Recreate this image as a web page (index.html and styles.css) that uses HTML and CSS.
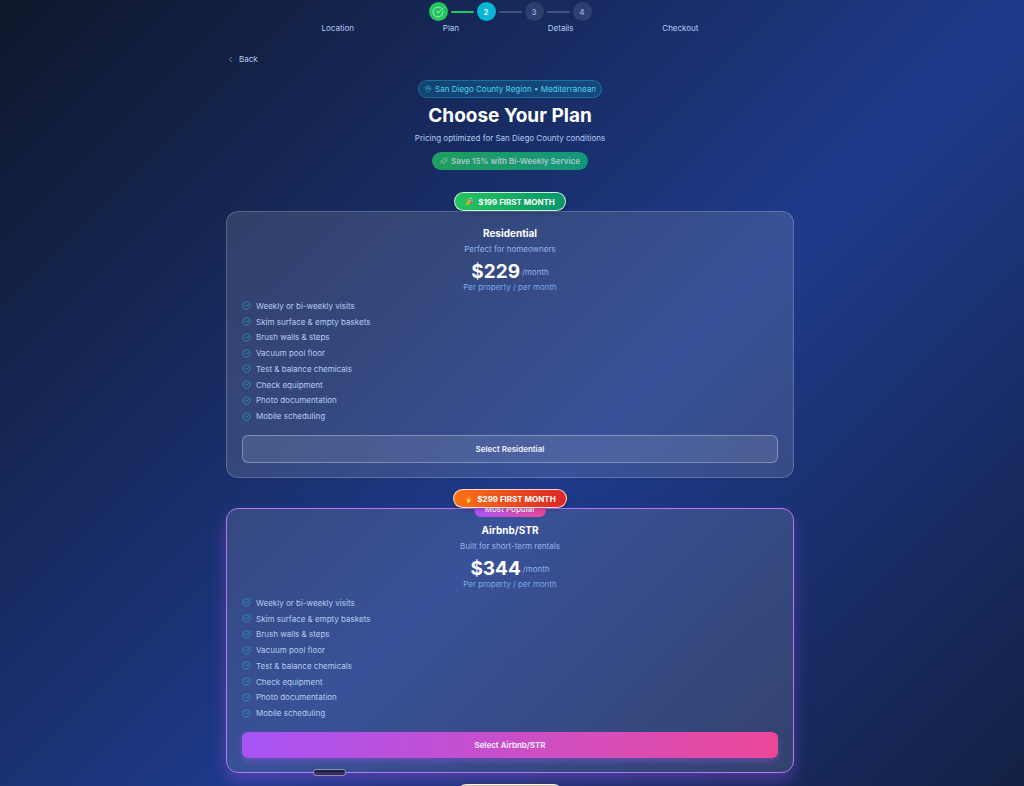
FILE: index.html
```
<!DOCTYPE html>
<html lang="en">
<head>
    <meta charset="UTF-8">
    <meta name="viewport" content="width=device-width, initial-scale=1.0">
    <title>Choose Your Plan</title>
    <link rel="stylesheet" href="styles.css">
</head>
<body>
    <svg class="sprite" aria-hidden="true">
        <symbol id="check" viewBox="0 0 24 24">
            <path d="M21.8 10A10 10 0 1 1 17 3.3"/>
            <path d="m9 11 3 3L22 4"/>
        </symbol>
        <symbol id="party" viewBox="0 0 24 24">
            <path d="M2 22 8 7l9 9z" fill="#fbbf24"/>
            <path d="M5 15l5 4M7 10l7 7" stroke="#ea580c" stroke-width="2"/>
            <path d="M11 12c2-3 1-6-1-9M14 13c1-4 4-4 7-5" stroke="#f9a8d4" stroke-width="2" fill="none"/>
            <path d="M13 15c3-2 6-1 9 1" stroke="#ef4444" stroke-width="3" fill="none"/>
            <circle cx="5" cy="5" r="2" fill="#f87171"/>
            <circle cx="17" cy="3" r="2" fill="#fde047"/>
            <circle cx="20" cy="12" r="2" fill="#60a5fa"/>
        </symbol>
        <symbol id="fire" viewBox="0 0 24 24">
            <path d="M11 1c2 5 7 8 8 13 1 6-3 9-7 9s-8-3-7-9c0-3 2-5 3-7 1 2 1 3 2 4 2-3 2-6 1-10z" fill="#ff8a1f"/>
            <path d="M12 11c1 3 4 4 4 8 0 2-2 4-4 4s-4-2-4-4c0-3 3-4 4-8z" fill="#ffe066"/>
        </symbol>
    </svg>

    <main class="page">
        <nav class="progress" aria-label="Progress">
            <div class="steps">
                <span class="step done"><svg class="icon"><use href="#check"/></svg></span>
                <span class="line done"></span>
                <span class="step current">2</span>
                <span class="line"></span>
                <span class="step">3</span>
                <span class="line"></span>
                <span class="step">4</span>
            </div>
            <div class="step-labels">
                <span>Location</span>
                <span>Plan</span>
                <span>Details</span>
                <span>Checkout</span>
            </div>
        </nav>

        <button type="button" class="back">
            <svg class="icon" viewBox="0 0 24 24"><path d="m15 18-6-6 6-6"/></svg>
            Back
        </button>

        <header class="intro">
            <div class="region">
                <svg class="icon" viewBox="0 0 24 24"><path d="M20 10c0 5-5.500 10.200-7.400 11.800a1 1 0 0 1-1.200 0C9.500 20.200 4 15 4 10a8 8 0 0 1 16 0"/><circle cx="12" cy="10" r="3"/></svg>
                San Diego County Region • Mediterranean
            </div>
            <h1>Choose Your Plan</h1>
            <p>Pricing optimized for San Diego County conditions</p>
            <div class="save">
                <svg class="icon" viewBox="0 0 24 24"><path d="M10 15.500a2 2 0 0 0-1.400-1.400l-6.200-1.600a.5.5 0 0 1 0-1l6.200-1.600A2 2 0 0 0 10 8.500l1.500-6.100a.5.5 0 0 1 1 0L14 8.500a2 2 0 0 0 1.500 1.400l6.100 1.600a.5.5 0 0 1 0 1l-6.100 1.600a2 2 0 0 0-1.500 1.400l-1.500 6.100a.5.5 0 0 1-1 0zM20 3v4M22 5h-4M4 17v2M5 18H3"/></svg>
                Save 15% with Bi-Weekly Service
            </div>
        </header>

        <section class="plan">
            <div class="promo green"><svg class="emoji"><use href="#party"/></svg>$199 FIRST MONTH</div>
            <article class="card">
                <h2>Residential</h2>
                <p class="tagline">Perfect for homeowners</p>
                <p class="price"><strong>$229</strong> /month</p>
                <p class="unit">Per property / per month</p>
                <ul class="features">
                    <li><svg class="icon"><use href="#check"/></svg>Weekly or bi-weekly visits</li>
                    <li><svg class="icon"><use href="#check"/></svg>Skim surface &amp; empty baskets</li>
                    <li><svg class="icon"><use href="#check"/></svg>Brush walls &amp; steps</li>
                    <li><svg class="icon"><use href="#check"/></svg>Vacuum pool floor</li>
                    <li><svg class="icon"><use href="#check"/></svg>Test &amp; balance chemicals</li>
                    <li><svg class="icon"><use href="#check"/></svg>Check equipment</li>
                    <li><svg class="icon"><use href="#check"/></svg>Photo documentation</li>
                    <li><svg class="icon"><use href="#check"/></svg>Mobile scheduling</li>
                </ul>
                <button type="button" class="select outline">Select Residential</button>
            </article>
        </section>

        <section class="plan">
            <div class="promo orange"><svg class="emoji"><use href="#fire"/></svg>$299 FIRST MONTH</div>
            <article class="card popular">
                <span class="popular-tag">Most Popular</span>
                <h2>Airbnb/STR</h2>
                <p class="tagline">Built for short-term rentals</p>
                <p class="price"><strong>$344</strong> /month</p>
                <p class="unit">Per property / per month</p>
                <ul class="features">
                    <li><svg class="icon"><use href="#check"/></svg>Weekly or bi-weekly visits</li>
                    <li><svg class="icon"><use href="#check"/></svg>Skim surface &amp; empty baskets</li>
                    <li><svg class="icon"><use href="#check"/></svg>Brush walls &amp; steps</li>
                    <li><svg class="icon"><use href="#check"/></svg>Vacuum pool floor</li>
                    <li><svg class="icon"><use href="#check"/></svg>Test &amp; balance chemicals</li>
                    <li><svg class="icon"><use href="#check"/></svg>Check equipment</li>
                    <li><svg class="icon"><use href="#check"/></svg>Photo documentation</li>
                    <li><svg class="icon"><use href="#check"/></svg>Mobile scheduling</li>
                </ul>
                <button type="button" class="select gradient">Select Airbnb/STR</button>
            </article>
        </section>

        <section class="plan">
            <div class="promo gold"></div>
        </section>
    </main>

    <div class="handle"></div>
</body>
</html>
```
FILE: styles.css
```
* {
    box-sizing: border-box;
    margin: 0;
    padding: 0;
}

html {
    min-height: 100%;
    background: #0f172a;
}

body {
    height: 100vh;
    padding: 2px 4px 0 0;
    overflow: hidden;
    font-family: Inter, "Liberation Sans", sans-serif;
    font-size: 8px;
    line-height: 12px;
    color: #b4ccf0;
    background: linear-gradient(135deg, #0f172a 0%, #1e3a8a 57%, #0f172a 116%);
}

button {
    font: inherit;
    cursor: pointer;
}

.sprite {
    display: none;
}

.icon {
    width: 9px;
    height: 9px;
    flex-shrink: 0;
    fill: none;
    stroke: currentColor;
    stroke-width: 2;
    stroke-linecap: round;
    stroke-linejoin: round;
}

.page {
    width: 100%;
    max-width: 568px;
    margin: 0 auto;
}

/* progress */
.progress {
    max-width: 377px;
    margin: 0 auto;
}

.steps {
    display: flex;
    justify-content: center;
    align-items: center;
    gap: 3px;
}

.step {
    display: flex;
    align-items: center;
    justify-content: center;
    width: 19px;
    height: 19px;
    border-radius: 50%;
    background: rgba(255, 255, 255, 0.1);
    color: #7ba6ea;
    font-weight: 600;
}

.step.done {
    background: #22c55e;
    color: #a7ecc0;
}

.step .icon {
    width: 12px;
    height: 12px;
}

.step.current {
    background: #06b6d4;
    color: #fff;
}

.line {
    width: 23px;
    height: 2px;
    border-radius: 1px;
    background: rgba(255, 255, 255, 0.2);
}

.line.done {
    background: #22c55e;
}

.step-labels {
    display: flex;
    justify-content: space-between;
    margin-top: 1px;
}

.back {
    display: flex;
    align-items: center;
    gap: 4px;
    margin-top: 19px;
    border: 0;
    background: none;
    color: #b4ccf0;
}

.back .icon {
    opacity: 0.7;
}

/* heading */
.intro {
    display: flex;
    flex-direction: column;
    align-items: center;
    margin-top: 15px;
}

.region,
.save {
    display: flex;
    align-items: center;
    gap: 3px;
    height: 18px;
    padding: 0 8px;
    border-radius: 9px;
}

.region {
    padding: 0 5px;
    border: 1px solid rgba(34, 211, 238, 0.3);
    background: rgba(6, 182, 212, 0.2);
    color: #4fd0ea;
}

.region .icon,
.save .icon {
    width: 8px;
    height: 8px;
    opacity: 0.7;
}

h1 {
    margin-top: 6px;
    font-size: 19px;
    line-height: 24px;
    color: #fff;
}

.intro p {
    margin-top: 4px;
}

.save {
    margin-top: 8px;
    background: linear-gradient(to right, #22c55e, #10b981);
    color: #dff5ea;
    font-weight: 600;
    opacity: 0.75;
}

/* plans */
.plan {
    display: flex;
    flex-direction: column;
    align-items: center;
    margin-top: 11px;
}

.intro + .plan {
    margin-top: 22px;
}

.promo {
    position: relative;
    z-index: 1;
    display: flex;
    align-items: center;
    gap: 4px;
    height: 19px;
    padding: 0 10px;
    border: 1px solid rgba(255, 255, 255, 0.8);
    border-radius: 10px;
    color: #fff;
    font-weight: 700;
    box-shadow: 0 2px 4px rgba(0, 0, 0, 0.2);
}

.emoji {
    width: 9px;
    height: 9px;
}

.green {
    background: linear-gradient(to right, #22c55e, #059669);
}

.orange {
    background: linear-gradient(to right, #f97316, #dc2626);
}

.gold {
    width: 106px;
    background: #d6b98c;
}

.card {
    position: relative;
    width: 100%;
    padding: 14px 15px;
    border: 1px solid rgba(255, 255, 255, 0.2);
    border-radius: 12px;
    background: rgba(255, 255, 255, 0.12);
    text-align: center;
}

.popular {
    border-color: #b377f5;
    box-shadow: 0 8px 16px rgba(168, 85, 247, 0.35);
}

.popular-tag {
    position: absolute;
    top: -8px;
    left: 50%;
    transform: translateX(-50%);
    padding: 2px 10px;
    border-radius: 6px;
    background: linear-gradient(to right, #a855f7, #ec4899);
    color: #fff;
    font-weight: 500;
}

h2 {
    font-size: 10px;
    line-height: 14px;
    color: #fff;
}

.tagline {
    margin-top: 3px;
    color: #93b4ec;
}

.price {
    display: flex;
    justify-content: center;
    align-items: center;
    gap: 2px;
    margin-top: 5px;
    color: #93b4ec;
}

.price strong {
    font-size: 19px;
    line-height: 24px;
    color: #fff;
}

.unit {
    margin-top: -3px;
    color: #7ba6ea;
}

.features {
    display: grid;
    grid-auto-rows: 1fr;
    align-items: center;
    min-height: 126px;
    margin-top: 5px;
    list-style: none;
}

.features li {
    display: flex;
    align-items: center;
    gap: 5px;
}

.features .icon {
    color: #2b9cc4;
}

.select {
    width: 100%;
    margin-top: 11px;
    padding: 7px;
    border: 0;
    border-radius: 6px;
    color: #eef3ff;
    font-weight: 600;
}

.outline {
    border: 1px solid rgba(255, 255, 255, 0.3);
    background: rgba(255, 255, 255, 0.1);
}

.gradient {
    background: linear-gradient(to right, #a855f7, #ec4899);
    box-shadow: 0 3px 6px rgba(168, 85, 247, 0.4);
}

.handle {
    position: fixed;
    left: 313px;
    bottom: 10px;
    width: 33px;
    height: 7px;
    border: 1px solid #8f90a8;
    border-radius: 3px;
    background: linear-gradient(#17234b 50%, #3b2a66 50%);
}
```
